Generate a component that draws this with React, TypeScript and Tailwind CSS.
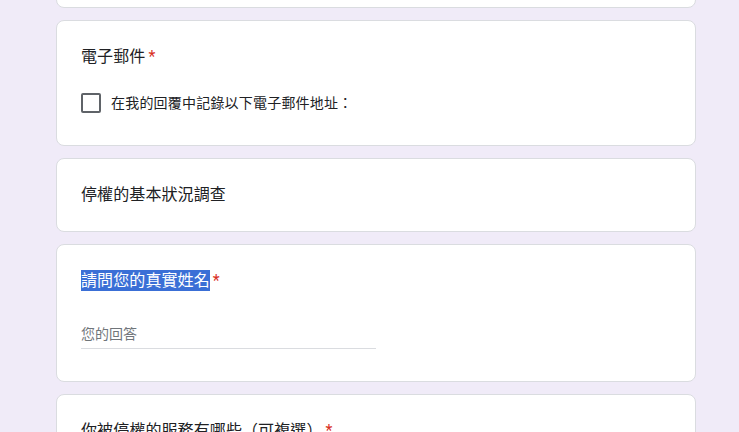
import { Fragment } from "react";

const font = "font-['Roboto','Noto_Sans_CJK_TC',sans-serif]";

function Card({ children, className = "" }: { children?: React.ReactNode; className?: string }) {
  return (
    <div className={`w-[640px] rounded-lg border border-[#dadce0] bg-white px-6 ${className}`}>
      {children}
    </div>
  );
}

function Title({ text, required, selected }: { text: string; required?: boolean; selected?: boolean }) {
  return (
    <div className="text-[16px] leading-6 tracking-[0.1px] text-[#202124]">
      {selected ? <span className="bg-[#3a6fd6] py-[1px] text-white">{text}</span> : <Fragment>{text}</Fragment>}
      {required && <span className="ml-[3px] text-[#d93025]">*</span>}
    </div>
  );
}

export default function App() {
  return (
    <div className={`h-[432px] overflow-hidden bg-[#f0ebf8] ${font}`}>
      <div className="flex flex-col gap-3 pl-[56px]">
        <Card className="-mt-[52px] h-[60px]" />

        <Card className="pt-6 pb-8">
          <Title text="電子郵件" required />
          <label className="mt-6 flex items-center gap-[10px]">
            <span className="h-5 w-5 shrink-0 rounded-[2px] border-2 border-[#5f6368]" />
            <span className="text-[14px] leading-5 tracking-[0.2px] text-[#202124]">
              在我的回覆中記錄以下電子郵件地址：
            </span>
          </label>
        </Card>

        <Card className="py-6">
          <Title text="停權的基本狀況調查" />
        </Card>

        <Card className="pt-6 pb-8">
          <Title text="請問您的真實姓名" required selected />
          <div className="mt-4 h-[40px] w-[295px] border-b border-[#dadce0] pt-[13px] text-[14px] leading-6 text-[#70757a]">
            您的回答
          </div>
        </Card>

        <Card className="h-[80px] pt-6">
          <Title text="你被停權的服務有哪些（可複選）" required />
        </Card>
      </div>
    </div>
  );
}
